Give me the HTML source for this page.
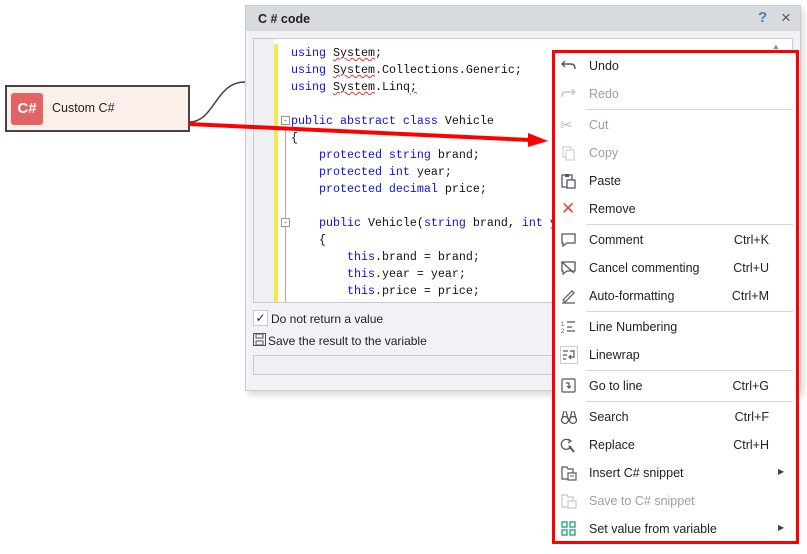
<!DOCTYPE html>
<html><head><meta charset="utf-8"><style>
*{margin:0;padding:0;box-sizing:border-box}
body{width:807px;height:554px;background:#fff;position:relative;overflow:hidden;font-family:"Liberation Sans",sans-serif;font-size:12px;color:#222}
.abs{position:absolute}
.code{position:absolute;left:291px;font-family:"Liberation Mono",monospace;font-size:11.67px;color:#111;white-space:pre;line-height:17px}
.k{color:#1010e0}
.sq{text-decoration:underline wavy #e33;text-decoration-thickness:1px}
.mi{position:absolute;left:589px;font-size:12.5px;color:#222;line-height:14px}
.dis{color:#9aa0a8}
.sc{position:absolute;right:38px;font-size:12.5px;color:#222;line-height:14px}
.sep{position:absolute;left:586px;width:207px;height:1px;background:#d4d6da}
.ic{position:absolute;left:560px}
</style></head><body>
<div class="abs" style="left:245px;top:5px;width:556px;height:386px;background:#f0f2f5;border:1px solid #c9ccd1;box-shadow:3px 4px 6px rgba(0,0,0,.15)"></div>
<div class="abs" style="left:246px;top:6px;width:554px;height:25px;background:#d7dade"></div>
<div class="abs" style="left:258px;top:12px;font-weight:bold;font-size:12.5px;color:#222">C # code</div>
<div class="abs" style="left:758px;top:9px;font-size:15px;color:#4a7fc0;font-weight:bold">?</div>
<div class="abs" style="left:781px;top:8px;font-size:17px;color:#555">×</div>
<div class="abs" style="left:253px;top:38px;width:540px;height:265px;background:#fff;border:1px solid #c8cbd0"></div>
<div class="abs" style="left:254px;top:39px;width:20px;height:263px;background:#eef0f3"></div>
<div class="abs" style="left:274px;top:44px;width:4px;height:258px;background:#f7e850"></div>
<div class="abs" style="left:285px;top:127px;width:1px;height:175px;background:#aaa"></div>
<div class="abs" style="left:281px;top:116px;width:9px;height:9px;border:1px solid #999;background:#fff;font-size:9px;line-height:6px;text-align:center;color:#666">-</div>
<div class="abs" style="left:281px;top:218px;width:9px;height:9px;border:1px solid #999;background:#fff;font-size:9px;line-height:6px;text-align:center;color:#666">-</div>
<div class="code" style="top:45px"><span class="k">using</span> <span class="sq">System</span>;
<span class="k">using</span> <span class="sq">System</span>.Collections.Generic;
<span class="k">using</span> <span class="sq">System</span>.Linq<span class="sq">;</span>

<span class="k">public abstract class</span> Vehicle
{
    <span class="k">protected string</span> brand;
    <span class="k">protected int</span> year;
    <span class="k">protected decimal</span> price;

    <span class="k">public</span> Vehicle(<span class="k">string</span> brand, <span class="k">int</span> y
    {
        <span class="k">this</span>.brand = brand;
        <span class="k">this</span>.year = year;
        <span class="k">this</span>.price = price;</div>
<div class="abs" style="left:253px;top:310px;width:15px;height:16px;border:1px solid #c8cbd0;background:#fff;font-size:12px;text-align:center;line-height:14px">✓</div>
<div class="abs" style="left:271px;top:312px;font-size:12px">Do not return a value</div>
<svg class="abs" style="left:253px;top:333px" width="13" height="13"><rect x="0.5" y="0.5" width="12" height="12" fill="none" stroke="#555"/><rect x="3" y="1" width="7" height="4" fill="none" stroke="#555"/><rect x="3" y="8" width="7" height="4" fill="none" stroke="#555"/></svg>
<div class="abs" style="left:268px;top:334px;font-size:12px">Save the result to the variable</div>
<div class="abs" style="left:253px;top:355px;width:540px;height:20px;border:1px solid #c8cbd0;background:#eef0f3"></div>
<div class="abs" style="left:5px;top:85px;width:185px;height:47px;background:#fdf0eb;border:2px solid #444"></div>
<div class="abs" style="left:11px;top:93px;width:32px;height:32px;background:#e26464;border-radius:3px;color:#fff;font-weight:bold;font-size:15px;text-align:center;line-height:32px">C#</div>
<div class="abs" style="left:52px;top:101px;font-size:12.5px">Custom C#</div>
<svg class="abs" style="left:0;top:0" width="807" height="554">
<path d="M189 122 C215 122 215 82 245 82" fill="none" stroke="#444" stroke-width="1.5"/>
<line x1="189" y1="124" x2="530" y2="140" stroke="#f00" stroke-width="4"/>
<polygon points="528,133 548,141 528,147" fill="#f00"/>
</svg>
<div class="abs" style="left:552px;top:50px;width:247px;height:494px;background:#fff;border:3px solid #f00"></div>
<div class="abs" style="left:772px;top:42px;font-size:8px;color:#888">▲</div>
<svg class="ic" style="top:58px" width="18" height="16"><path d="M5 3 L2 6 L5 9 M2 6 H11 C14 6 15 8 15 11" fill="none" stroke="#556" stroke-width="1.4"/></svg>
<div class="mi" style="top:59px">Undo</div>
<svg class="ic" style="top:86px" width="18" height="16"><path d="M12 3 L15 6 L12 9 M15 6 H6 C3 6 2 8 2 11" fill="none" stroke="#c5c8cc" stroke-width="1.4"/></svg>
<div class="mi dis" style="top:87px">Redo</div>
<div class="sep" style="top:109px"></div>
<div class="ic" style="top:116px;font-size:15px;color:#bbb">✂</div>
<div class="mi dis" style="top:118px">Cut</div>
<svg class="ic" style="top:145px" width="18" height="16"><rect x="3" y="2" width="8" height="10" fill="none" stroke="#c5c8cc"/><rect x="6" y="5" width="8" height="10" fill="#fff" stroke="#c5c8cc"/></svg>
<div class="mi dis" style="top:146px">Copy</div>
<svg class="ic" style="top:173px" width="18" height="16"><rect x="2" y="2" width="10" height="12" fill="none" stroke="#556" stroke-width="1.3"/><rect x="7" y="7" width="8" height="8" fill="#fff" stroke="#556" stroke-width="1.3"/><rect x="5" y="1" width="4" height="3" fill="#556"/></svg>
<div class="mi" style="top:174px">Paste</div>
<div class="ic" style="top:199px;font-size:17px;color:#e04848;left:561px">✕</div>
<div class="mi" style="top:202px">Remove</div>
<div class="sep" style="top:224px"></div>
<svg class="ic" style="top:232px" width="18" height="16"><path d="M2 2 H15 V11 H7 L3 14 V11 H2 Z" fill="none" stroke="#556" stroke-width="1.3"/></svg>
<div class="mi" style="top:233px">Comment</div><div class="sc" style="top:233px">Ctrl+K</div>
<svg class="ic" style="top:260px" width="18" height="16"><path d="M2 2 H15 V11 H7 L3 14 V11 H2 Z M2 2 L14 13" fill="none" stroke="#556" stroke-width="1.3"/></svg>
<div class="mi" style="top:261px">Cancel commenting</div><div class="sc" style="top:261px">Ctrl+U</div>
<svg class="ic" style="top:288px" width="18" height="16"><path d="M3 12 L12 3 L14 5 L5 14 Z M2 15 H15" fill="none" stroke="#556" stroke-width="1.2"/></svg>
<div class="mi" style="top:289px">Auto-formatting</div><div class="sc" style="top:289px">Ctrl+M</div>
<div class="sep" style="top:311px"></div>
<svg class="ic" style="top:319px" width="18" height="16"><text x="1" y="7" font-size="6" fill="#556">1</text><text x="1" y="14" font-size="6" fill="#556">2</text><path d="M7 3 H15 M7 8 H12 M7 12 H15" stroke="#556" stroke-width="1.3"/></svg>
<div class="mi" style="top:320px">Line Numbering</div>
<svg class="ic" style="top:346px" width="18" height="18"><rect x="0.5" y="0.5" width="17" height="17" fill="none" stroke="#ccc"/><path d="M3 5 H8 M3 9 H7 M3 13 H6 M10 5 H14 V11 H9 M11 9 L9 11 L11 13" fill="none" stroke="#556" stroke-width="1.2"/></svg>
<div class="mi" style="top:348px">Linewrap</div>
<div class="sep" style="top:370px"></div>
<svg class="ic" style="top:378px" width="18" height="16"><rect x="2" y="1" width="13" height="13" rx="1" fill="none" stroke="#556" stroke-width="1.2"/><path d="M6 5 H9 V10 M7 8 L9 10 L11 8" fill="none" stroke="#556" stroke-width="1.2"/></svg>
<div class="mi" style="top:379px">Go to line</div><div class="sc" style="top:379px">Ctrl+G</div>
<div class="sep" style="top:401px"></div>
<svg class="ic" style="top:409px" width="18" height="16"><circle cx="5" cy="11" r="3.5" fill="none" stroke="#556" stroke-width="1.3"/><circle cx="13" cy="11" r="3.5" fill="none" stroke="#556" stroke-width="1.3"/><path d="M2 10 L4 2 M8 10 L6 2 M10 10 L12 2 M16 10 L14 2" stroke="#556" stroke-width="1.3"/></svg>
<div class="mi" style="top:410px">Search</div><div class="sc" style="top:410px">Ctrl+F</div>
<svg class="ic" style="top:437px" width="18" height="16"><path d="M10 4 A5 5 0 1 0 11 9" fill="none" stroke="#556" stroke-width="1.3"/><path d="M9 9 L14 15" stroke="#556" stroke-width="2"/><path d="M8 2 L11 4 L8 6" fill="none" stroke="#556" stroke-width="1.2"/></svg>
<div class="mi" style="top:438px">Replace</div><div class="sc" style="top:438px">Ctrl+H</div>
<svg class="ic" style="top:465px" width="18" height="16"><path d="M2 2 H7 L8 4 H13 V14 H2 Z" fill="none" stroke="#556" stroke-width="1.2"/><rect x="8" y="8" width="8" height="7" fill="#fff" stroke="#556" stroke-width="1.2"/><path d="M10 11 H14" stroke="#556"/></svg>
<div class="mi" style="top:466px">Insert C# snippet</div><div class="abs" style="left:778px;top:467px;font-size:8px;color:#444">▶</div>
<svg class="ic" style="top:493px" width="18" height="16"><path d="M2 2 H7 L8 4 H13 V14 H2 Z" fill="none" stroke="#c5c8cc" stroke-width="1.2"/><rect x="8" y="8" width="8" height="7" fill="#fff" stroke="#c5c8cc" stroke-width="1.2"/></svg>
<div class="mi dis" style="top:494px">Save to C# snippet</div>
<svg class="ic" style="top:521px" width="18" height="16"><rect x="2" y="1" width="5" height="5" fill="none" stroke="#2aa87a" stroke-width="1.4"/><rect x="10" y="1" width="5" height="5" fill="none" stroke="#2aa87a" stroke-width="1.4"/><rect x="2" y="9" width="5" height="5" fill="none" stroke="#2aa87a" stroke-width="1.4"/><rect x="10" y="9" width="5" height="5" fill="none" stroke="#2aa87a" stroke-width="1.4"/></svg>
<div class="mi" style="top:522px">Set value from variable</div><div class="abs" style="left:778px;top:523px;font-size:8px;color:#444">▶</div>
</body></html>
